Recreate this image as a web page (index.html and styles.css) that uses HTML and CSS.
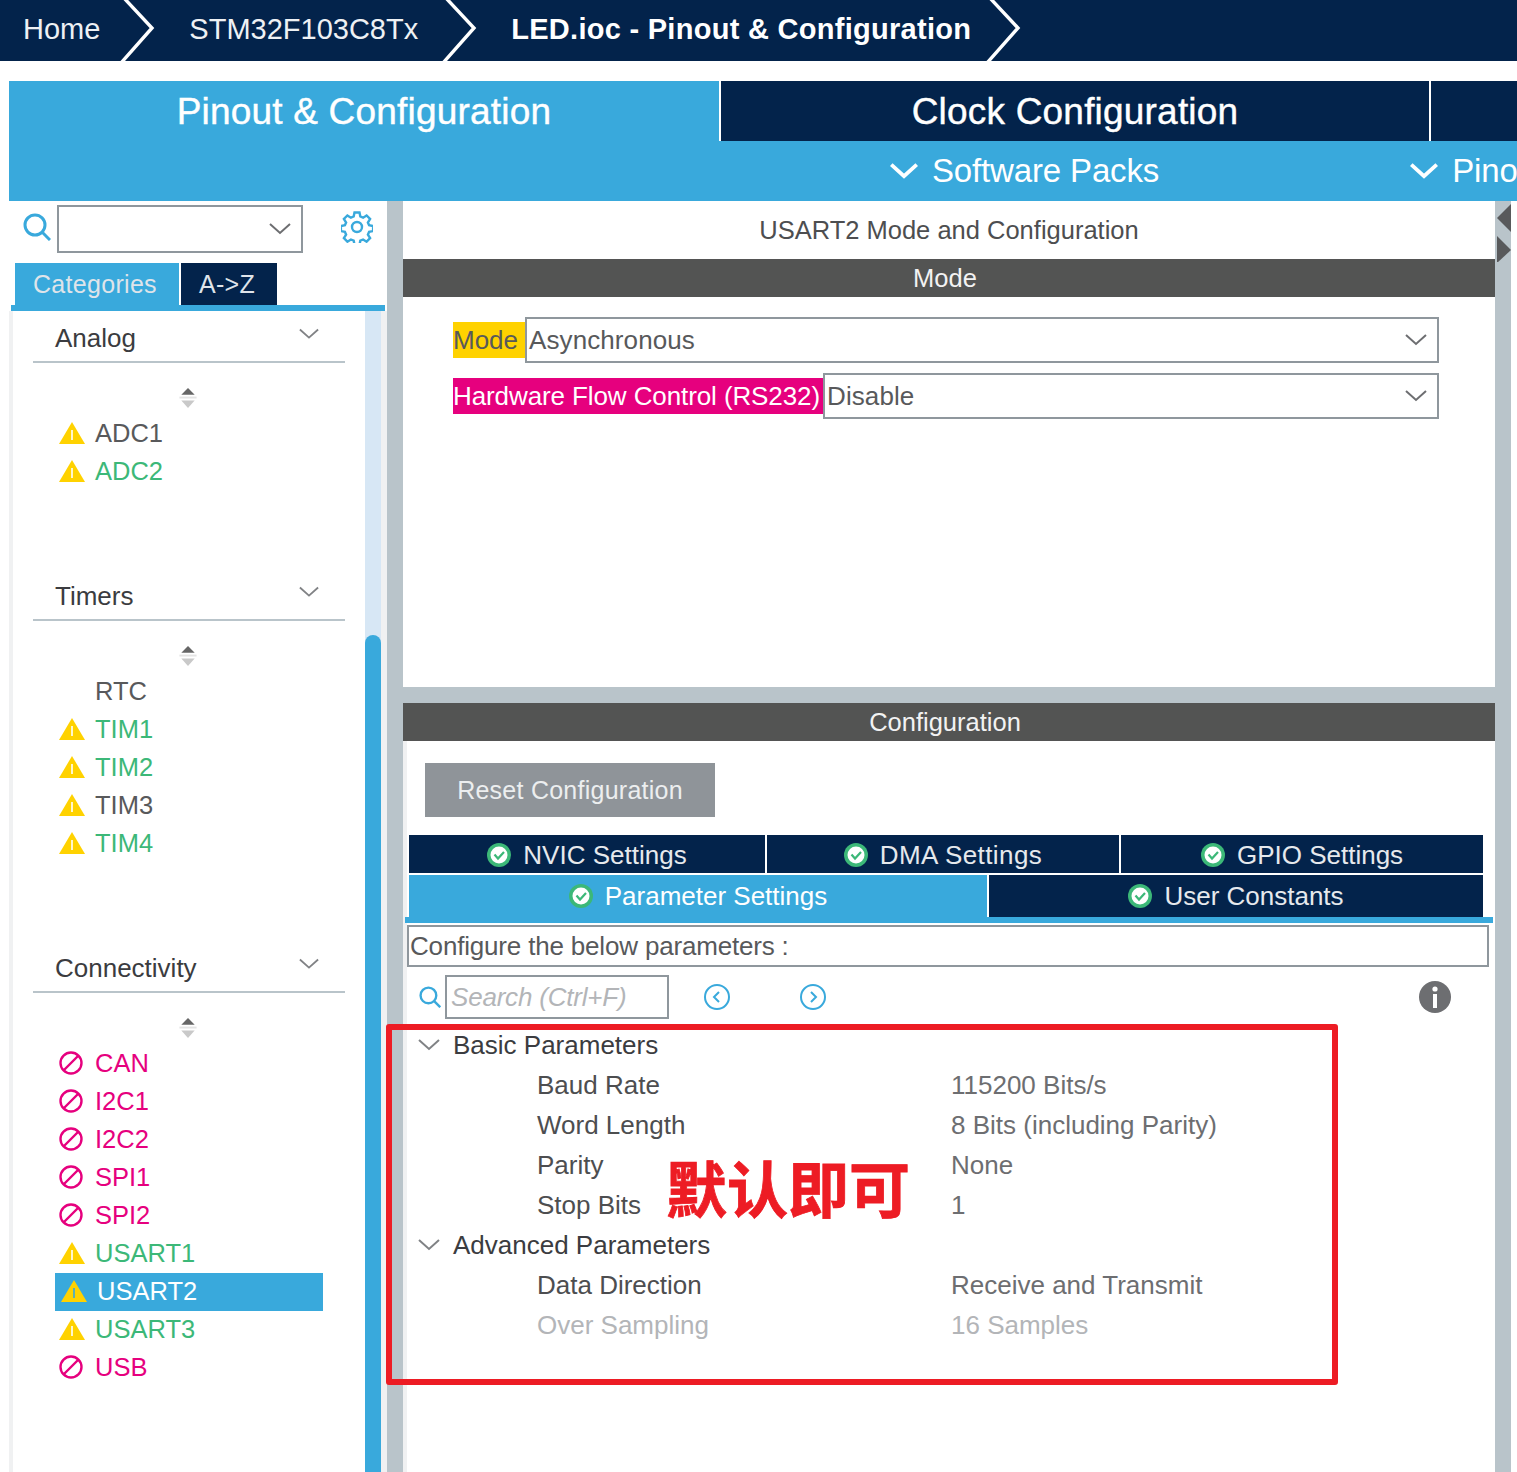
FILE: index.html
```html
<!DOCTYPE html>
<html lang="en">
<head>
  <meta charset="UTF-8">
  <title>LED.ioc - Pinout &amp; Configuration</title>
  <link rel="stylesheet" href="styles.css">
</head>
<body>
  <svg class="defs" width="0" height="0">
    <symbol id="warn" viewBox="0 0 26 22">
      <path d="M13 0 L26 22 L0 22 Z" fill="#ffd200"/>
      <rect x="12.2" y="8" width="1.6" height="10" fill="#fff"/>
    </symbol>
    <symbol id="warn-sel" viewBox="0 0 26 22">
      <path d="M13 0 L26 22 L0 22 Z" fill="#ffd200"/>
      <rect x="12.2" y="8" width="1.6" height="10" fill="#39a9dc"/>
    </symbol>
    <symbol id="ban" viewBox="0 0 24 24">
      <circle cx="12" cy="12" r="10.5" fill="none" stroke="#e6007e" stroke-width="2.4"/>
      <path d="M5 19 L19 5" stroke="#e6007e" stroke-width="2.4"/>
    </symbol>
    <symbol id="ok" viewBox="0 0 24 24">
      <circle cx="12" cy="12" r="12" fill="#3cb878"/>
      <circle cx="12" cy="12" r="8.5" fill="#fff"/>
      <path d="M7.5 11.5 L11 15.5 L17 9" fill="none" stroke="#3cb878" stroke-width="2.2"/>
    </symbol>
    <symbol id="sort" viewBox="0 0 18 22">
      <path d="M9 0 L16 7 L2 7 Z" fill="#666"/>
      <rect x="0" y="9" width="18" height="2" fill="#e4e4e4"/>
      <path d="M2 13 L16 13 L9 21 Z" fill="#c9c9c9"/>
    </symbol>
    <symbol id="chev" viewBox="0 0 22 12">
      <path d="M1 1 L11 10 L21 1" fill="none" stroke="currentColor"/>
    </symbol>
    <symbol id="crumb" viewBox="0 0 36 61">
      <path d="M3 -3 L32 28 L1 63" fill="none" stroke="#fff" stroke-width="3.4"/>
    </symbol>
    <symbol id="lens" viewBox="0 0 28 28">
      <circle cx="12" cy="12" r="10" fill="none" stroke="#39a9dc" stroke-width="3"/>
      <path d="M19 19 L27 27" stroke="#39a9dc" stroke-width="3"/>
    </symbol>
  </svg>

  <header class="crumbs">
    <span class="crumb crumb-home">Home</span>
    <svg class="crumb-sep"><use href="#crumb"/></svg>
    <span class="crumb crumb-chip">STM32F103C8Tx</span>
    <svg class="crumb-sep"><use href="#crumb"/></svg>
    <span class="crumb crumb-file">LED.ioc - Pinout &amp; Configuration</span>
    <svg class="crumb-sep"><use href="#crumb"/></svg>
  </header>

  <nav class="main-tabs">
    <div class="main-tab tab-pinout">Pinout &amp; Configuration</div>
    <div class="main-tab tab-clock">Clock Configuration</div>
    <div class="main-tab tab-rest"></div>
  </nav>
  <div class="sub-bar">
    <svg class="sub-chev"><use href="#chev"/></svg>
    <span class="sub-item">Software Packs</span>
    <svg class="sub-chev sub-chev-2"><use href="#chev"/></svg>
    <span class="sub-item">Pinout</span>
  </div>

  <div class="workspace">
    <aside class="side">
      <div class="side-search">
        <svg class="side-lens"><use href="#lens"/></svg>
        <div class="combo"><svg class="combo-chev"><use href="#chev"/></svg></div>
        <svg class="gear" viewBox="0 0 32 32">
          <circle cx="16" cy="16" r="5" fill="none" stroke="#39a9dc" stroke-width="2.4"/>
          <path d="M13.5 1.5h5l.8 4 2.8 1.2 3.5-2.2 3.5 3.5-2.2 3.5 1.2 2.8 4 .8v5l-4 .8-1.2 2.8 2.2 3.5-3.5 3.5-3.5-2.2-2.8 1.2-.8 4h-5l-.8-4-2.8-1.2-3.5 2.2-3.5-3.5 2.2-3.5-1.2-2.8-4-.8v-5l4-.8 1.2-2.8-2.2-3.5 3.5-3.5 3.5 2.2 2.8-1.2z" fill="none" stroke="#39a9dc" stroke-width="2.4"/>
        </svg>
      </div>
      <div class="side-tabs">
        <div class="side-tab side-tab-on">Categories</div>
        <div class="side-tab">A-&gt;Z</div>
      </div>
      <div class="side-line"></div>
      <div class="side-body">
        <div class="cat-list">
          <section class="cat">
            <div class="cat-head">Analog<svg class="cat-chev"><use href="#chev"/></svg></div>
            <div class="cat-sort"><svg><use href="#sort"/></svg></div>
            <div class="row"><svg class="ico"><use href="#warn"/></svg>ADC1</div>
            <div class="row green"><svg class="ico"><use href="#warn"/></svg>ADC2</div>
          </section>
          <section class="cat">
            <div class="cat-head">Timers<svg class="cat-chev"><use href="#chev"/></svg></div>
            <div class="cat-sort"><svg><use href="#sort"/></svg></div>
            <div class="row"><span class="ico"></span>RTC</div>
            <div class="row green"><svg class="ico"><use href="#warn"/></svg>TIM1</div>
            <div class="row green"><svg class="ico"><use href="#warn"/></svg>TIM2</div>
            <div class="row"><svg class="ico"><use href="#warn"/></svg>TIM3</div>
            <div class="row green"><svg class="ico"><use href="#warn"/></svg>TIM4</div>
          </section>
          <section class="cat">
            <div class="cat-head">Connectivity<svg class="cat-chev"><use href="#chev"/></svg></div>
            <div class="cat-sort"><svg><use href="#sort"/></svg></div>
            <div class="row pink"><svg class="ico ico-ban"><use href="#ban"/></svg>CAN</div>
            <div class="row pink"><svg class="ico ico-ban"><use href="#ban"/></svg>I2C1</div>
            <div class="row pink"><svg class="ico ico-ban"><use href="#ban"/></svg>I2C2</div>
            <div class="row pink"><svg class="ico ico-ban"><use href="#ban"/></svg>SPI1</div>
            <div class="row pink"><svg class="ico ico-ban"><use href="#ban"/></svg>SPI2</div>
            <div class="row green"><svg class="ico"><use href="#warn"/></svg>USART1</div>
            <div class="row row-on"><svg class="ico"><use href="#warn-sel"/></svg>USART2</div>
            <div class="row green"><svg class="ico"><use href="#warn"/></svg>USART3</div>
            <div class="row pink"><svg class="ico ico-ban"><use href="#ban"/></svg>USB</div>
          </section>
        </div>
        <div class="side-scroll"><div class="side-thumb"></div></div>
      </div>
    </aside>

    <div class="gutter"></div>

    <main class="center">
      <section class="mode-panel">
        <div class="panel-title">USART2 Mode and Configuration</div>
        <div class="bar">Mode</div>
        <div class="mode-rows">
          <div class="mode-row mode-row-1">
            <span class="mode-label label-yellow">Mode</span>
            <div class="mode-select">Asynchronous<svg class="combo-chev"><use href="#chev"/></svg></div>
          </div>
          <div class="mode-row">
            <span class="mode-label label-pink">Hardware Flow Control (RS232)</span>
            <div class="mode-select">Disable<svg class="combo-chev"><use href="#chev"/></svg></div>
          </div>
        </div>
      </section>

      <section class="config-panel">
        <div class="bar">Configuration</div>
        <div class="config-body">
          <div class="reset-btn">Reset Configuration</div>
          <div class="cfg-tabs cfg-tabs-1">
            <div class="cfg-tab cfg-nvic"><svg class="ok"><use href="#ok"/></svg>NVIC Settings</div>
            <div class="cfg-tab cfg-dma"><svg class="ok"><use href="#ok"/></svg>DMA Settings</div>
            <div class="cfg-tab cfg-gpio"><svg class="ok"><use href="#ok"/></svg>GPIO Settings</div>
          </div>
          <div class="cfg-tabs cfg-tabs-2">
            <div class="cfg-tab cfg-param"><svg class="ok"><use href="#ok"/></svg>Parameter Settings</div>
            <div class="cfg-tab cfg-user"><svg class="ok"><use href="#ok"/></svg>User Constants</div>
          </div>
          <div class="cfg-line"></div>
          <div class="cfg-hint">Configure the below parameters :</div>
          <div class="find-row">
            <svg class="find-lens"><use href="#lens"/></svg>
            <div class="find-input">Search (Ctrl+F)</div>
            <svg class="find-nav" viewBox="0 0 28 28">
              <circle cx="14" cy="14" r="12" fill="none" stroke="#39a9dc" stroke-width="2"/>
              <path d="M16 9 L11 14 L16 19" fill="none" stroke="#39a9dc" stroke-width="2"/>
            </svg>
            <svg class="find-nav find-next" viewBox="0 0 28 28">
              <circle cx="14" cy="14" r="12" fill="none" stroke="#39a9dc" stroke-width="2"/>
              <path d="M12 9 L17 14 L12 19" fill="none" stroke="#39a9dc" stroke-width="2"/>
            </svg>
            <svg class="info" viewBox="0 0 32 32">
              <circle cx="16" cy="16" r="16" fill="#6d6e71"/>
              <circle cx="16" cy="8" r="2.6" fill="#fff"/>
              <rect x="14" y="13" width="4" height="14" fill="#fff"/>
            </svg>
          </div>
          <div class="params">
            <div class="p-group"><svg class="p-chev"><use href="#chev"/></svg>Basic Parameters</div>
            <div class="p-row"><span class="p-name">Baud Rate</span><span>115200 Bits/s</span></div>
            <div class="p-row"><span class="p-name">Word Length</span><span>8 Bits (including Parity)</span></div>
            <div class="p-row"><span class="p-name">Parity</span><span>None</span></div>
            <div class="p-row"><span class="p-name">Stop Bits</span><span>1</span></div>
            <div class="p-group"><svg class="p-chev"><use href="#chev"/></svg>Advanced Parameters</div>
            <div class="p-row"><span class="p-name">Data Direction</span><span>Receive and Transmit</span></div>
            <div class="p-row p-off"><span class="p-name">Over Sampling</span><span>16 Samples</span></div>
          </div>
        </div>
      </section>
    </main>

    <div class="gutter gutter-right">
      <svg class="arrows" viewBox="0 0 14 60">
        <path d="M14 2 L0 16 L14 30 Z" fill="#58595b"/>
        <path d="M0 34 L14 48 L0 61 Z" fill="#58595b"/>
      </svg>
    </div>
  </div>

  <!-- annotation drawn over the screenshot -->
  <div class="note-box"></div>
  <div class="note-text">默认即可</div>
</body>
</html>
```

FILE: styles.css
```css
* {
  box-sizing: border-box;
}

html, body {
  height: 1472px;
  overflow: hidden;
}

body {
  margin: 0;
  position: relative;
  background: #fff;
  color: #4d4e50;
  font-family: "Liberation Sans", Arial, sans-serif;
  stroke-width: 2;
}

.defs {
  display: block;
  height: 0;
}

/* breadcrumb */
.crumbs {
  display: flex;
  height: 61px;
  background: #03234b;
  color: #fff;
  overflow: hidden;
  align-items: center;
}

.crumb {
  font-size: 29px;
  white-space: nowrap;
  color: #eef1f4;
  padding-bottom: 2px;
}

.crumb-sep {
  width: 36px;
  height: 61px;
  flex: none;
}

.crumb-home { margin-left: 23px; margin-right: 20px; }
.crumb-chip { margin-left: 33px; margin-right: 24px; }
.crumb-file { margin-left: 33px; margin-right: 15px; font-weight: bold; letter-spacing: .28px; color: #fff; }

/* big tabs */
.main-tabs {
  display: flex;
  gap: 2px;
  margin: 20px 0 0 9px;
  height: 60px;
}

.main-tab {
  text-align: center;
  color: #fff;
  font-size: 37px;
  line-height: 62px;
  letter-spacing: .2px;
  -webkit-text-stroke: .4px #fff;
}

.tab-pinout { width: 710px; background: #39a9dc; }
.tab-clock { width: 708px; background: #03234b; }
.tab-rest { flex: 1; background: #03234b; }

.sub-bar {
  display: flex;
  align-items: center;
  height: 60px;
  margin-left: 9px;
  background: #39a9dc;
  color: #fff;
  overflow: hidden;
  white-space: nowrap;
}

.sub-chev {
  width: 28px;
  height: 16px;
  margin-left: 881px;
  margin-right: 14px;
  flex: none;
  stroke-width: 3;
}

.sub-chev-2 { margin-left: 251px; }

.sub-item {
  font-size: 33px;
  letter-spacing: -.15px;
}

/* columns */
.workspace {
  display: flex;
  height: 1271px;
}

.side {
  width: 378px;
  margin-left: 9px;
  flex: none;
  display: flex;
  flex-direction: column;
}

.gutter {
  width: 16px;
  flex: none;
  background: #b9c4ca;
}

.gutter-right {
  padding-left: 2px;
}

.arrows {
  display: block;
  width: 14px;
  height: 60px;
  margin-top: 1px;
}

.center {
  width: 1092px;
  flex: none;
  display: flex;
  flex-direction: column;
  gap: 16px;
  background: #b9c4ca;
}

/* left panel */
.side-search {
  height: 62px;
  padding: 4px 0 0 14px;
  display: flex;
  align-items: flex-start;
}

.side-lens {
  width: 28px;
  height: 28px;
  margin-top: 8px;
  flex: none;
}

.combo {
  position: relative;
  width: 246px;
  height: 48px;
  margin-left: 6px;
  border: 2px solid #8f979d;
}

.combo-chev {
  position: absolute;
  right: 10px;
  top: 50%;
  width: 22px;
  height: 12px;
  margin-top: -6px;
  color: #6d6e71;
}

.gear {
  width: 32px;
  height: 32px;
  margin: 6px 0 0 38px;
  flex: none;
}

.side-tabs {
  display: flex;
  gap: 2px;
  height: 42px;
  margin-left: 6px;
}

.side-tab {
  padding: 0 22px 0 18px;
  background: #03234b;
  color: #dfe4ea;
  font-size: 25px;
  line-height: 42px;
  letter-spacing: .3px;
}

.side-tab-on {
  width: 164px;
  background: #39a9dc;
}

.side-line {
  height: 6px;
  margin: 0 2px;
  background: #39a9dc;
}

.side-body {
  display: flex;
  flex: 1;
  min-height: 0;
  border-left: 4px solid #f0f1f2;
  border-right: 6px solid #f0f1f2;
}

.cat-list {
  width: 352px;
  padding-left: 20px;
}

.cat {
  margin-bottom: 78px;
}

.cat-head {
  position: relative;
  width: 312px;
  height: 52px;
  padding: 12px 0 0 22px;
  border-bottom: 2px solid #b9c4ca;
  color: #3b3c40;
  font-size: 26px;
}

.cat-chev {
  position: absolute;
  right: 26px;
  top: 17px;
  width: 20px;
  height: 12px;
  color: #808285;
}

.cat-sort {
  height: 52px;
  padding: 25px 0 0 146px;
}

.cat-sort svg {
  display: block;
  width: 18px;
  height: 21px;
}

.row {
  display: flex;
  align-items: center;
  width: 268px;
  height: 38px;
  margin-left: 22px;
  padding: 0 0 2px 4px;
  font-size: 25.5px;
  color: #58595b;
}

.ico {
  width: 26px;
  height: 22px;
  margin-right: 10px;
  flex: none;
}

.ico-ban {
  width: 24px;
  height: 24px;
  margin-right: 12px;
}

.green { color: #3cb878; }
.pink { color: #e6007e; }

.row-on {
  padding-left: 6px;
  background: #39a9dc;
  color: #fff;
}

.side-scroll {
  width: 16px;
  background: #d7e7f5;
  padding-top: 324px;
}

.side-thumb {
  height: 100%;
  background: #39a9dc;
  border-radius: 8px 8px 0 0;
}

/* mode panel */
.mode-panel {
  height: 486px;
  flex: none;
  background: #fff;
}

.panel-title {
  height: 58px;
  text-align: center;
  font-size: 25.5px;
  line-height: 58px;
  color: #4d4e50;
}

.bar {
  height: 38px;
  padding-right: 8px;
  background: #535453;
  color: #f2f2f2;
  text-align: center;
  font-size: 25.5px;
  line-height: 38px;
}

.mode-rows {
  padding: 20px 56px 0 50px;
  display: flex;
  flex-direction: column;
  gap: 10px;
}

.mode-row {
  display: flex;
  align-items: center;
  height: 46px;
  font-size: 26px;
}

.mode-label {
  flex: none;
  height: 36px;
  line-height: 36px;
  white-space: nowrap;
}

.label-yellow {
  width: 72px;
  background: #ffd200;
  color: #58595b;
}

.label-pink {
  width: 370px;
  background: #e6007e;
  color: #fff;
  letter-spacing: -.1px;
}

.mode-select {
  position: relative;
  flex: 1;
  height: 46px;
  padding-left: 2px;
  border: 2px solid #8f979d;
  line-height: 42px;
  color: #58595b;
  letter-spacing: .1px;
}

/* configuration panel */
.config-panel {
  flex: 1;
  min-height: 0;
  background: #fff;
}

.config-body {
  padding: 22px 6px 0 4px;
  height: 731px;
  background: linear-gradient(to right, #f0f1f2 4px, #fff 4px);
}

.reset-btn {
  width: 290px;
  height: 54px;
  margin-left: 18px;
  background: #8f9499;
  color: #eceeef;
  text-align: center;
  font-size: 25px;
  line-height: 54px;
  letter-spacing: .25px;
}

.cfg-tabs {
  display: flex;
  gap: 2px;
  margin: 0 6px 0 2px;
}

.cfg-tabs-1 {
  height: 38px;
  margin-top: 18px;
}

.cfg-tabs-1 .cfg-tab {
  padding-top: 2px;
}

.cfg-tabs-2 {
  height: 42px;
  margin-top: 2px;
}

.cfg-tab {
  display: flex;
  justify-content: center;
  align-items: center;
  background: #03234b;
  color: #e6e9ed;
  font-size: 26px;
}

.ok {
  width: 24px;
  height: 24px;
  margin-right: 12px;
  flex: none;
}

.cfg-nvic { width: 356px; }
.cfg-dma { width: 352px; letter-spacing: .4px; }
.cfg-gpio { flex: 1; }
.cfg-param { width: 578px; background: #39a9dc; color: #fff; }
.cfg-user { flex: 1; }

.cfg-line {
  height: 6px;
  margin-right: -4px;
  margin-left: -2px;
  background: #39a9dc;
}

.cfg-hint {
  height: 42px;
  margin-top: 2px;
  padding-left: 1px;
  border: 2px solid #8f979d;
  font-size: 26px;
  line-height: 38px;
  letter-spacing: -.18px;
  color: #58595b;
}

.find-row {
  display: flex;
  align-items: center;
  height: 44px;
  margin-top: 8px;
  padding-left: 12px;
}

.find-lens {
  width: 22px;
  height: 22px;
  flex: none;
}

.find-input {
  width: 224px;
  height: 44px;
  margin-left: 4px;
  padding-left: 4px;
  border: 2px solid #8f979d;
  color: #b3b5b8;
  font-size: 26px;
  font-style: italic;
  line-height: 40px;
  letter-spacing: -.2px;
  white-space: nowrap;
}

.find-nav {
  width: 28px;
  height: 28px;
  margin-left: 34px;
  flex: none;
}

.find-next {
  margin-left: 68px;
}

.info {
  width: 32px;
  height: 32px;
  margin-left: 592px;
  flex: none;
}

.params {
  padding-top: 6px;
  font-size: 26px;
}

.p-group {
  display: flex;
  align-items: center;
  height: 40px;
  color: #3b3c40;
}

.p-chev {
  width: 22px;
  height: 12px;
  margin: 0 13px 0 11px;
  color: #808285;
  flex: none;
}

.p-row {
  display: grid;
  grid-template-columns: 414px 1fr;
  align-items: center;
  height: 40px;
  padding-left: 130px;
  color: #6d6e71;
}

.p-name {
  color: #4d4e50;
}

.p-off span {
  color: #b3b5b8;
}

/* red annotation */
.note-box {
  position: absolute;
  left: 386px;
  top: 1024px;
  width: 952px;
  height: 361px;
  border: 6px solid #ed1c24;
  border-radius: 3px;
}

.note-text {
  position: absolute;
  left: 666px;
  top: 1143px;
  font-family: "Noto Sans CJK SC", sans-serif;
  font-size: 61px;
  font-weight: bold;
  line-height: 87px;
  color: #ed1c24;
  -webkit-text-stroke: .8px #ed1c24;
  white-space: nowrap;
}
```
